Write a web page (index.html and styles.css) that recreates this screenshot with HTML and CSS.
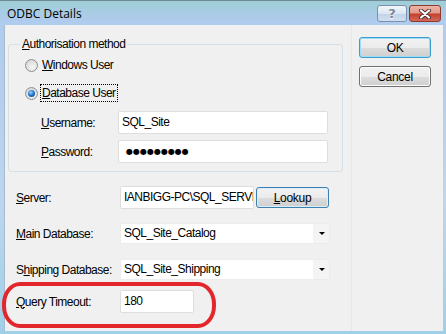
FILE: index.html
```html
<!DOCTYPE html>
<html lang="en">
<head>
  <meta charset="UTF-8">
  <title>ODBC Details</title>
  <link rel="stylesheet" href="styles.css">
</head>
<body>
<div class="window">
  <div class="titlebar">
    <span class="title">ODBC Details</span>
    <div class="caption_buttons">
      <div class="cap_btn help">?</div>
      <div class="cap_btn close">
        <svg width="14" height="10" viewBox="0 0 14 10">
          <path d="M3 1.5 L11 8.5 M11 1.5 L3 8.5" stroke="#4a3030" stroke-width="4" stroke-linecap="round"/>
          <path d="M3 1.5 L11 8.5 M11 1.5 L3 8.5" stroke="#fff" stroke-width="2.2" stroke-linecap="round"/>
        </svg>
      </div>
    </div>
  </div>

  <div class="client">
    <div class="main">
      <fieldset class="group">
        <legend><u>A</u>uthorisation method</legend>

        <div class="radio_row first">
          <span class="radio"></span>
          <span class="radio_label"><u>W</u>indows User</span>
        </div>
        <div class="radio_row">
          <span class="radio checked"></span>
          <span class="radio_label focus"><u>D</u>atabase User</span>
        </div>

        <div class="row inner user">
          <label><u>U</u>sername:</label>
          <div class="field wide">SQL_Site</div>
        </div>
        <div class="row inner pass">
          <label><u>P</u>assword:</label>
          <div class="field wide dots">&#9679;&#9679;&#9679;&#9679;&#9679;&#9679;&#9679;&#9679;&#9679;</div>
        </div>
      </fieldset>

      <div class="row server">
        <label><u>S</u>erver:</label>
        <div class="field server_field">IANBIGG-PC\SQL_SERVER</div>
        <button class="btn lookup"><u>L</u>ookup</button>
      </div>

      <div class="row combo_row main_db">
        <label><u>M</u>ain Database:</label>
        <div class="combo">
          <span class="combo_text">SQL_Site_Catalog</span>
          <span class="combo_arrow"></span>
        </div>
      </div>

      <div class="row combo_row ship_db">
        <label>S<u>h</u>ipping Database:</label>
        <div class="combo">
          <span class="combo_text">SQL_Site_Shipping</span>
          <span class="combo_arrow"></span>
        </div>
      </div>

      <div class="row timeout">
        <label><u>Q</u>uery Timeout:</label>
        <div class="field short">180</div>
      </div>
    </div>

    <div class="side">
      <button class="btn default">OK</button>
      <button class="btn">Cancel</button>
    </div>
  </div>

  <div class="highlight"></div>
</div>
</body>
</html>
```

FILE: styles.css
```css
* {
  box-sizing: border-box;
}

body {
  margin: 0;
  padding: 0;
  font-family: 'Liberation Sans', Arial, sans-serif;
  font-size: 12px;
  letter-spacing: -0.5px;
  color: #000;
}

.window {
  width: 446px;
  height: 334px;
  display: flex;
  flex-direction: column;
  position: relative;
  background: linear-gradient(#9fcfd6, #afcbee 20px, #bcd6ee 60%, #9fd0e8);
  border-top: 1px solid #6e8a99;
}

/* title bar */
.titlebar {
  height: 24px;
  display: flex;
  align-items: flex-start;
  padding: 0 5px 0 7px;
}

.title {
  font-family: 'Open Sans', 'Noto Sans', sans-serif;
  font-size: 12px;
  letter-spacing: 0;
  line-height: 16px;
  margin-top: 5px;
  color: #000;
}

.caption_buttons {
  margin-left: auto;
  margin-top: 4px;
  display: flex;
  gap: 2px;
}

.cap_btn {
  height: 17px;
  border-radius: 3px;
  display: flex;
  align-items: center;
  justify-content: center;
}

.cap_btn.help {
  width: 30px;
  border: 1px solid #7c90ad;
  background: linear-gradient(#f2f6fb, #dbe6f3 50%, #c2d3e8 51%, #cfe0f1);
  font-family: 'DejaVu Sans', sans-serif;
  font-weight: bold;
  font-size: 13px;
  letter-spacing: 0;
  color: #7a8594;
  text-shadow: 0 0 1px #fff, 0 1px 0 #fff;
}

.cap_btn.close {
  width: 32px;
  border: 1px solid #8c3a2c;
  background: linear-gradient(#eeb4a8, #e19a8a 45%, #c6412f 55%, #d4685a);
}

/* dialog body */
.client {
  flex: 1;
  display: flex;
  margin: 0 3px 3px 4px;
  background: #f0f0f0;
  border-left: 1px solid #a9bccd;
}

.main {
  width: 346px;
}

.group {
  margin: 12px 0 0 3px;
  width: 335px;
  padding: 0 0 8px 0;
  border: 1px solid #d5dfe5;
  border-radius: 3px;
}

.group legend {
  margin-left: 11px;
  padding: 0 2px;
  line-height: 14px;
}

.radio_row {
  height: 18px;
  display: flex;
  align-items: center;
  margin-top: 10px;
  padding-left: 16px;
}

.radio_row.first {
  margin-top: 5px;
}

.radio {
  width: 13px;
  height: 13px;
  border-radius: 50%;
  border: 1px solid #8e8f8f;
  background: radial-gradient(circle at 60% 65%, #f6f6f6, #cfcfcf);
  margin-right: 2px;
  display: flex;
  align-items: center;
  justify-content: center;
}

.radio.checked::after {
  content: "";
  width: 7px;
  height: 7px;
  border-radius: 50%;
  background: radial-gradient(circle at 40% 35%, #9ad5ff, #1f73c8 50%, #0c3f7c);
}

.radio_label {
  height: 18px;
  line-height: 16px;
  padding: 0 1px;
  border: 1px solid transparent;
}

.radio_label.focus {
  border: 1px dotted #000;
}

.row {
  display: flex;
  align-items: center;
  padding-left: 11px;
}

.row label {
  width: 104px;
  flex-shrink: 0;
  white-space: nowrap;
}

.row.inner {
  padding-left: 32px;
}

.row.inner label {
  width: 77px;
}

.row.user {
  margin-top: 9px;
}

.row.pass {
  margin-top: 6px;
}

.field {
  height: 23px;
  background: #fff;
  border: 1px solid #dedede;
  border-radius: 2px;
  padding: 0 3px;
  line-height: 21px;
  white-space: nowrap;
  overflow: hidden;
}

.field.wide {
  width: 210px;
}

.field.dots {
  font-family: 'DejaVu Sans', sans-serif;
  font-size: 8px;
  letter-spacing: 0;
  padding-left: 7px;
}

.row.server {
  margin-top: 14px;
}

.server_field {
  width: 134px;
  text-overflow: clip;
}

.btn {
  font-family: inherit;
  font-size: 12px;
  letter-spacing: -0.3px;
  color: #000;
  height: 21px;
  padding: 0;
  border: 1px solid #707070;
  border-radius: 3px;
  background: linear-gradient(#f2f2f2, #ebebeb 50%, #dddddd 51%, #cfcfcf);
  box-shadow: inset 0 0 0 1px #fcfcfc;
}

.btn.lookup {
  width: 73px;
  height: 21px;
  margin-left: 2px;
  border-color: #3c7fb1;
  box-shadow: inset 0 0 0 1px #d9f0fc;
}

.combo_row {
  margin-top: 14px;
}

.row.ship_db {
  margin-top: 15px;
}

.combo {
  width: 210px;
  height: 21px;
  display: flex;
  background: #fff;
  border: 1px solid #ececec;
}

.combo_text {
  flex: 1;
  padding-left: 3px;
  line-height: 19px;
}

.combo_arrow {
  width: 17px;
  background: #f4f4f4;
  border-left: 1px solid #fff;
  position: relative;
}

.combo_arrow::after {
  content: "";
  position: absolute;
  left: 6px;
  top: 8px;
  border-left: 3px solid transparent;
  border-right: 3px solid transparent;
  border-top: 3px solid #000;
}

.row.timeout {
  margin-top: 10px;
}

.field.short {
  width: 74px;
}

/* buttons column */
.side {
  flex: 1;
  display: flex;
  flex-direction: column;
  gap: 8px;
  padding: 12px 0 0 7px;
  border-left: 1px solid #e7e7e7;
}

.side .btn {
  width: 72px;
}

.btn.default {
  border-color: #3c9ed0;
  box-shadow: inset 0 0 0 1px #9fdcf5;
}

/* hand drawn red mark */
.highlight {
  position: absolute;
  left: 2px;
  top: 281px;
  width: 214px;
  height: 46px;
  border: 4px solid #e2262b;
  border-radius: 18px / 22px;
}
```
